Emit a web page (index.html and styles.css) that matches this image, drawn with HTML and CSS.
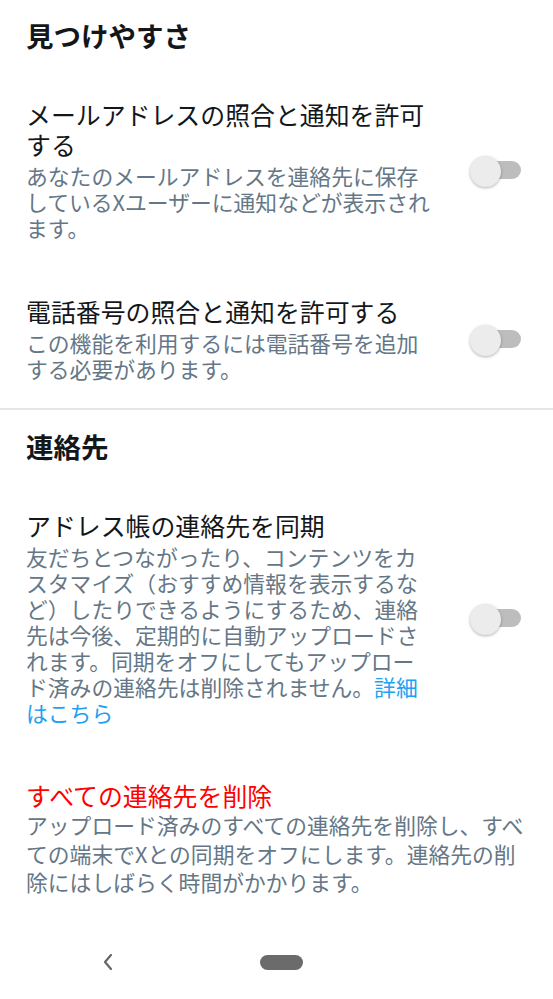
FILE: index.html
```html
<!DOCTYPE html>
<html lang="ja">

<head>
    <meta charset="utf-8">
    <title>見つけやすさと連絡先</title>
    <link rel="stylesheet" href="styles.css">
</head>

<body>
    <div class="page">
        <h2 class="section-title">見つけやすさ</h2>

        <div class="item item-first">
            <div class="item-text">
                <div class="item-title">メールアドレスの照合と通知を許可する</div>
                <div class="item-desc">あなたのメールアドレスを連絡先に保存しているXユーザーに通知などが表示されます。</div>
            </div>
            <div class="toggle">
                <span class="thumb"></span>
                <span class="track"></span>
            </div>
        </div>

        <div class="item">
            <div class="item-text">
                <div class="item-title">電話番号の照合と通知を許可する</div>
                <div class="item-desc">この機能を利用するには電話番号を追加する必要があります。</div>
            </div>
            <div class="toggle">
                <span class="thumb"></span>
                <span class="track"></span>
            </div>
        </div>

        <div class="divider"></div>

        <h2 class="section-title section-title-2">連絡先</h2>

        <div class="item item-sync">
            <div class="item-text">
                <div class="item-title">アドレス帳の連絡先を同期</div>
                <div class="item-desc">友だちとつながったり、コンテンツをカスタマイズ（おすすめ情報を表示するなど）したりできるようにするため、連絡先は今後、定期的に自動アップロードされます。同期をオフにしてもアップロード済みの連絡先は削除されません。<a href="javascript:void(0)">詳細はこちら</a></div>
            </div>
            <div class="toggle">
                <span class="thumb"></span>
                <span class="track"></span>
            </div>
        </div>

        <div class="danger">
            <div class="item-title danger-title">すべての連絡先を削除</div>
            <div class="item-desc danger-desc">アップロード済みのすべての連絡先を削除し、すべての端末でXとの同期をオフにします。連絡先の削除にはしばらく時間がかかります。</div>
        </div>
    </div>

    <!-- ナビゲーションバー -->
    <div class="navbar">
        <svg class="nav-back" width="12" height="18" viewBox="0 0 12 18">
            <path d="M9 2 L3 9 L9 16" fill="none" stroke="#666" stroke-width="2.2" stroke-linecap="round" stroke-linejoin="round"/>
        </svg>
        <span class="nav-home"></span>
    </div>
</body>

</html>
```

FILE: styles.css
```css
*{
    padding: 0;
    margin: 0;
    box-sizing: border-box;
}
a{
    text-decoration: none;
    color: #1da1f2;
}
html,body{
    width: 100%;
    height: 100%;
    background-color: #fff;
}
body{
    font-family: "Noto Sans CJK JP", "Noto Sans", sans-serif;
    color: #14171a;
    display: flex;
    flex-direction: column;
}
.page{
    flex: 1;
}
.section-title{
    font-size: 27.5px;
    font-weight: 700;
    line-height: 36px;
    padding: 17px 26px 0;
}
.section-title-2{
    padding-top: 18px;
}
.item{
    display: flex;
    align-items: center;
    justify-content: space-between;
    padding: 0 32px 0 26px;
    margin-top: 55px;
}
.item-first{
    margin-top: 46px;
}
.item-sync{
    margin-top: 46px;
}
.item-text{
    width: 408px;
}
.item-title{
    font-size: 24.9px;
    line-height: 30px;
}
.item-desc{
    font-size: 21.8px;
    line-height: 26px;
    color: #657786;
    margin-top: 4px;
}
.toggle{
    display: flex;
    align-items: center;
}
.thumb{
    width: 31px;
    height: 31px;
    border-radius: 50%;
    background-color: #ececec;
    box-shadow: 0 1px 3px rgba(0, 0, 0, 0.3);
    position: relative;
    z-index: 1;
    margin-top: 3px;
}
.track{
    width: 43px;
    height: 18px;
    border-radius: 9px;
    background-color: #bdbdbd;
    margin-left: -23px;
}
.divider{
    height: 2px;
    background-color: #e6e6e6;
    margin-top: 26px;
}
.danger{
    padding: 0 20px 0 26px;
    margin-top: 54px;
}
.danger-title{
    color: #ff0000;
}
.danger-desc{
    line-height: 28.5px;
    margin-top: 1px;
}
.navbar{
    height: 70px;
    display: flex;
    align-items: center;
    padding-left: 102px;
    padding-bottom: 4px;
}
.nav-back{
    display: block;
}
.nav-home{
    width: 43px;
    height: 15px;
    border-radius: 8px;
    background-color: #6b6b6b;
    margin-left: 146px;
}
```
